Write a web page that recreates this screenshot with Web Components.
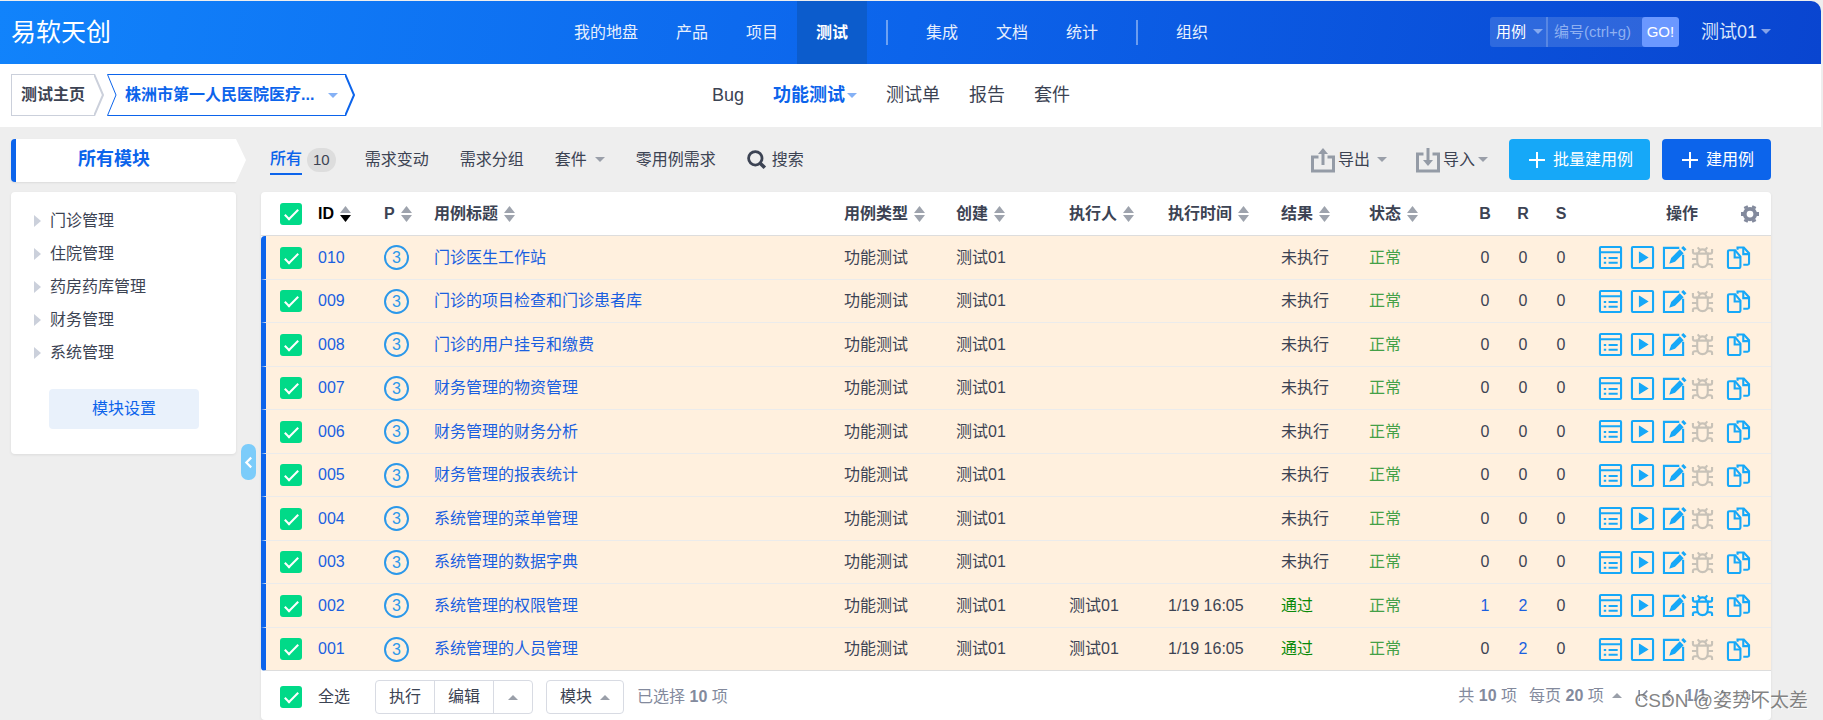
<!DOCTYPE html>
<html lang="zh-CN">
<head>
<meta charset="utf-8">
<title>功能测试</title>
<style>
  body {
    margin: 0;
    min-height: 100vh;
    box-sizing: border-box;
    padding: 1px 2px 0 0;
    position: relative;
    overflow: hidden;
    background: #eee;
    color: #3c4353;
    font: 16px/20px "Liberation Sans", "Noto Sans CJK SC", sans-serif;
  }
  .content {
    display: grid;
    grid-template-columns: 225px 25px minmax(0, 1fr);
    padding: 12px 50px 0 11px;
  }
  .watermark {
    position: absolute;
    right: 15px;
    bottom: 5px;
    font-size: 19px;
    line-height: 28px;
    color: rgba(110, 110, 110, 0.85);
    text-shadow: 1px 1px 0 rgba(255, 255, 255, 0.8);
  }
</style>
</head>
<body>
  <top-bar></top-bar>
  <sub-bar></sub-bar>
  <main class="content">
    <module-tree></module-tree>
    <side-toggle></side-toggle>
    <div>
      <filter-bar></filter-bar>
      <case-panel></case-panel>
    </div>
  </main>
  <div class="watermark">CSDN @姿势不太差</div>

<script>
const ICONS = {
  list: `<rect x="1" y="1" width="22" height="22" rx="1"/><path d="M1 6.500h22M10 12.500h9.500M10 17.500h9.500M5 12.500h2.500M5 17.500h2.500"/>`,
  play: `<rect x="1" y="1" width="22" height="22" rx="1"/><path d="M9 7l8 5-8 5z" fill="currentColor" stroke-width="1.5"/>`,
  edit: `<path d="M17 2H1v21h20V9"/><path d="M6.500 18.500l2-6L17.500 3.500l4 4-9 9z" fill="currentColor" stroke="none"/><path d="M19 2.200l2.200-2.200 3.300 3.300-2.200 2.200z" fill="currentColor" stroke="none"/>`,
  bug: `<path d="M6.500 8h11v8c0 4-2.500 6-5.500 6s-5.500-2-5.500-6z"/><path d="M8 8c0-3 1.500-4.500 4-4.500S16 5 16 8M1 13.500h5.500M17.500 13.500H23M2 3v3q0 2 2 2h3M22 3v3q0 2-2 2h-3M2 23v-2q0-2 2-2h3M22 23v-2q0-2-2-2h-3M7 1.500l2.500 3M17 1.500l-2.500 3"/>`,
  copy: `<path d="M1 6V21a2 2 0 0 0 2 2h9a2 2 0 0 0 2-2V11L8.500 4.500H2.500A1.500 1.500 0 0 0 1 6z"/><path d="M8 5v7h6"/><path d="M11 4V1.500h6.500L23 7.500V18a1.500 1.500 0 0 1-1.500 1.500H17"/><path d="M17 2v6.500h5"/>`,
  export: `<path d="M7.500 9H1.500V23h21V9h-6M12 17V3"/><path d="M7 6l5-6 5 6z" fill="currentColor" stroke="none"/>`,
  import: `<path d="M7.500 6H1.500V23h21V6h-6M12 0v13"/><path d="M7 12l5 6 5-6z" fill="currentColor" stroke="none"/>`,
  search: `<circle cx="10.500" cy="10.500" r="8.500" stroke-width="3.500"/><path d="M16 16l6.500 6.500" stroke-width="4.500"/>`,
  plus: `<path d="M12 0v24M0 12h24" stroke-width="3"/>`,
  gear: `<circle cx="12" cy="12" r="7" stroke-width="5"/><path d="M7.500 4.500l-1.500-3M16.500 4.500l1.500-3M7.500 19.500l-1.500 3M16.500 19.500l1.500 3M4 12H0M20 12h4" stroke-width="5.500"/>`,
  first: `<path d="M4 2v20M19 3l-9 9 9 9" stroke-width="3"/>`,
  prev: `<path d="M17 3l-9 9 9 9" stroke-width="4"/>`,
  next: `<path d="M7 3l9 9-9 9" stroke-width="4"/>`,
  last: `<path d="M20 2v20M5 3l9 9-9 9" stroke-width="3"/>`
};

// styles every component starts from
const BASE = `
  :host, * { box-sizing: border-box; }
  a { color: inherit; text-decoration: none; }
  button, select, input { font: inherit; color: inherit; border: 0; background: none; padding: 0; margin: 0; }
  input[type=checkbox] {
    appearance: none; display: block; width: 22px; height: 22px;
    background: #00da88; border-radius: 3px;
  }
  input[type=checkbox]::after {
    content: ""; display: block; box-sizing: border-box; width: 7px; height: 14px; margin: 3px 0 0 8px;
    border: solid #fff; border-width: 0 2px 2px 0; transform: rotate(45deg);
  }
`;

class BaseElement extends HTMLElement {
  constructor() {
    super();
    this.attachShadow({ mode: "open" });
  }
  connectedCallback() {
    this.shadowRoot.innerHTML = `<style>${BASE}${this.styles()}</style>${this.render()}`;
  }
  styles() { return ""; }
  render() { return ""; }
}

class UiIcon extends BaseElement {
  styles() {
    return `
      :host { display: inline-block; width: 24px; height: 24px; flex: none; }
      svg { display: block; width: 100%; height: 100%; overflow: visible; stroke-width: var(--stroke, 2); }
    `;
  }
  render() {
    return `<svg viewBox="0 0 24 24" fill="none" stroke="currentColor" aria-hidden="true">${ICONS[this.getAttribute("name")]}</svg>`;
  }
}

class UiCaret extends BaseElement {
  styles() {
    return `
      :host {
        display: inline-block; flex: none; width: 0; height: 0; color: #9a9fa9;
        border: 5px solid transparent; border-top-color: currentColor; border-bottom: 0;
      }
      :host([up]) { border-top: 0; border-bottom: 5px solid currentColor; }
    `;
  }
}

class SortMark extends BaseElement {
  styles() {
    return `
      :host { display: inline-block; width: 11px; height: 16px; margin-left: 6px; vertical-align: -3px; }
      svg { display: block; fill: #9ea3ad; }
      :host([desc]) .down { fill: #000; }
    `;
  }
  render() {
    return `<svg width="11" height="16" viewBox="0 0 11 16"><path d="M5.500 0L11 7H0z"/><path class="down" d="M5.500 16L11 9H0z"/></svg>`;
  }
}

class TopBar extends BaseElement {
  styles() {
    return `
      :host {
        display: grid; grid-template-columns: 1fr auto 1fr; height: 63px;
        padding: 0 50px 0 11px; border-radius: 0 10px 0 0; color: #fff;
        background: linear-gradient(100deg, #1183fb 0%, #0c64eb 50%, #0945d0 100%);
      }
      .logo { align-self: center; font-size: 25px; line-height: 32px; padding-bottom: 2px; }
      nav { display: flex; }
      nav a { padding: 22px 19px 21px; color: #e6effd; }
      nav a.active { background: #0c5ccc; font-weight: bold; color: #fff; }
      .bar { width: 2px; height: 25px; margin: 19px; background: rgba(255, 255, 255, .4); }
      .right { display: flex; align-items: center; justify-content: flex-end; gap: 22px; padding-bottom: 2px; }
      form {
        display: flex; align-items: center; height: 30px; border-radius: 3px;
        font-size: 15px; background: rgba(255, 255, 255, .15); overflow: hidden;
      }
      select { appearance: none; padding: 0 6px; width: 43px; }
      form ui-caret { color: #85a9f0; margin-right: 3px; }
      input { width: 96px; height: 30px; padding: 0 6px; border-left: 2px solid rgba(255, 255, 255, .2); }
      input::placeholder { color: #8fb0f1; opacity: 1; }
      form button { width: 37px; height: 30px; background: #6b98ff; border-radius: 3px; }
      .user { display: flex; align-items: center; gap: 4px; font-size: 18px; color: #dbe6fb; }
      .user ui-caret { color: #85a3e8; }
    `;
  }
  render() {
    return `
      <div class="logo">易软天创</div>
      <nav>
        <a href="#">我的地盘</a><a href="#">产品</a><a href="#">项目</a><a href="#" class="active">测试</a>
        <span class="bar"></span>
        <a href="#">集成</a><a href="#">文档</a><a href="#">统计</a>
        <span class="bar"></span>
        <a href="#">组织</a>
      </nav>
      <div class="right">
        <form>
          <select aria-label="对象类型"><option>用例</option></select>
          <ui-caret></ui-caret>
          <input type="text" placeholder="编号(ctrl+g)" aria-label="编号">
          <button type="button">GO!</button>
        </form>
        <button class="user">测试01<ui-caret></ui-caret></button>
      </div>
    `;
  }
}

class SubBar extends BaseElement {
  styles() {
    return `
      :host {
        display: grid; grid-template-columns: 1fr auto 1fr; align-items: center;
        height: 63px; padding: 0 50px 1px 11px; background: #fff;
      }
      .crumbs { display: flex; gap: 3px; }
      .crumb { display: flex; height: 42px; color: #cbd0db; }
      .crumb svg { display: block; fill: none; stroke: currentColor; stroke-width: 1; }
      .crumb span {
        display: flex; align-items: center; gap: 8px; white-space: nowrap;
        border: 1px solid currentColor; border-width: 1px 0; padding: 0 10px;
      }
      .home span { border-left-width: 1px; padding: 0 9px; }
      .home b { color: #3c4353; }
      .current { color: #0c64eb; }
      .current span { gap: 14px; padding: 0 7px 0 8px; }
      .current ui-caret { color: #85b1f5; }
      nav { display: flex; gap: 29px; font-size: 18px; }
      nav a { display: flex; align-items: center; gap: 2px; }
      nav .active { font-weight: bold; color: #0c64eb; }
      nav ui-caret { color: #85b1f5; }
    `;
  }
  render() {
    return `
      <div class="crumbs">
        <a href="#" class="crumb home"><span><b>测试主页</b></span>
          <svg width="10" height="42"><path d="M0 0L9 21L0 42" stroke-width="2"/></svg></a>
        <a href="#" class="crumb current">
          <svg width="10" height="42"><path d="M10 .5H.5L9 21L.5 41.500H10"/></svg>
          <span><b>株洲市第一人民医院医疗...</b><ui-caret></ui-caret></span>
          <svg width="10" height="42"><path d="M0 0L9 21L0 42" stroke-width="2"/></svg></a>
      </div>
      <nav>
        <a href="#">Bug</a>
        <a href="#" class="active">功能测试<ui-caret></ui-caret></a>
        <a href="#">测试单</a>
        <a href="#">报告</a>
        <a href="#">套件</a>
      </nav>
    `;
  }
}

class ModuleTree extends BaseElement {
  styles() {
    return `
      :host { display: block; }
      .head { display: flex; margin-right: -10px; height: 43px; margin-bottom: 10px; }
      .head h2 {
        margin: 0; flex: 1; font-size: 18px; line-height: 40px; text-align: center; color: #0c64eb;
        padding-right: 24px; background: #fff; border-left: 5px solid #0c64eb; border-radius: 4px 0 0 4px;
        box-shadow: 0 1px 2px rgba(0, 0, 0, .08);
      }
      .head svg { display: block; fill: #fff; }
      .panel {
        background: #fff; border-radius: 4px; height: 262px; padding: 12px 0 25px 23px;
        box-shadow: 0 1px 3px rgba(0, 0, 0, .08);
      }
      ul { list-style: none; margin: 0; padding: 0; }
      li { display: flex; align-items: center; gap: 9px; height: 33px; }
      li::before {
        content: ""; border: 6px solid transparent;
        border-left: 7px solid #cbd0db; border-right: 0;
      }
      button {
        width: 150px; height: 40px; margin: 20px 15px 0; border-radius: 4px;
        background: #e9f1fb; color: #0c64eb;
      }
    `;
  }
  render() {
    const items = ["门诊管理", "住院管理", "药房药库管理", "财务管理", "系统管理"];
    return `
      <div class="head"><h2>所有模块</h2><svg width="10" height="43"><path d="M0 0L10 21L0 43z"/></svg></div>
      <div class="panel">
        <ul>${items.map(t => `<li><a href="#">${t}</a></li>`).join("")}</ul>
        <button>模块设置</button>
      </div>
    `;
  }
}

class SideToggle extends BaseElement {
  styles() {
    return `
      :host { display: block; padding: 305px 5px 0; }
      button {
        display: flex; align-items: center; justify-content: center;
        width: 15px; height: 36px; border-radius: 7px; background: #7cccfa; color: #fff;
      }
      ui-icon { width: 13px; height: 13px; }
    `;
  }
  render() {
    return `<button aria-label="收起"><ui-icon name="prev"></ui-icon></button>`;
  }
}

class FilterBar extends BaseElement {
  styles() {
    return `
      :host { display: flex; justify-content: space-between; align-items: center; height: 41px; margin-bottom: 12px; }
      .tabs { display: flex; align-items: center; gap: 31px; padding-left: 9px; }
      .tabs a, button { display: flex; align-items: center; }
      .all { gap: 5px; margin-right: -2px; }
      .all b { font-weight: 500; color: #0c64eb; border-bottom: 2px solid #0c64eb; padding: 5px 0 4px; }
      .all i { font-style: normal; background: #ddd; border-radius: 12px; padding: 2px 6px; font-size: 15px; }
      .suite { gap: 8px; }
      .search { gap: 6px; }
      .search ui-icon { width: 19px; height: 19px; }
      .tools { display: flex; align-items: center; }
      .tools ui-icon { color: #949ba6; margin-right: 3px; --stroke: 3; }
      .tools ui-caret { margin-left: 7px; }
      .tools button { margin-right: 29px; }
      .tools .in { margin-right: 21px; }
      .in ui-caret { margin-left: 3px; }
      .tools .primary {
        height: 41px; padding: 0 17px 0 20px; margin: 0 0 0 12px;
        color: #fff; background: #0c64eb; border-radius: 4px;
      }
      .tools .batch { background: #16a8f8; margin: 0; }
      .primary ui-icon { width: 16px; height: 16px; margin-right: 8px; color: #fff; }
    `;
  }
  render() {
    return `
      <div class="tabs">
        <a href="#" class="all"><b>所有</b><i>10</i></a>
        <a href="#">需求变动</a>
        <a href="#">需求分组</a>
        <button class="suite">套件<ui-caret></ui-caret></button>
        <a href="#">零用例需求</a>
        <a href="#" class="search"><ui-icon name="search"></ui-icon>搜索</a>
      </div>
      <div class="tools">
        <button><ui-icon name="export"></ui-icon>导出<ui-caret></ui-caret></button>
        <button class="in"><ui-icon name="import"></ui-icon>导入<ui-caret></ui-caret></button>
        <button class="primary batch"><ui-icon name="plus"></ui-icon>批量建用例</button>
        <button class="primary"><ui-icon name="plus"></ui-icon>建用例</button>
      </div>
    `;
  }
}

const CASES = [
  { id: "010", title: "门诊医生工作站" },
  { id: "009", title: "门诊的项目检查和门诊患者库" },
  { id: "008", title: "门诊的用户挂号和缴费" },
  { id: "007", title: "财务管理的物资管理" },
  { id: "006", title: "财务管理的财务分析" },
  { id: "005", title: "财务管理的报表统计" },
  { id: "004", title: "系统管理的菜单管理" },
  { id: "003", title: "系统管理的数据字典" },
  { id: "002", title: "系统管理的权限管理", runner: "测试01", time: "1/19 16:05", b: 1, r: 2 },
  { id: "001", title: "系统管理的人员管理", runner: "测试01", time: "1/19 16:05", b: 0, r: 2 }
];

class CaseTable extends BaseElement {
  styles() {
    return `
      :host { display: block; }
      table { width: 100%; table-layout: fixed; border-collapse: separate; border-spacing: 0; }
      th, td { padding: 0; text-align: left; white-space: nowrap; }
      th { height: 44px; border-bottom: 1px solid #ddd; }
      td { height: 43px; border-bottom: 1px solid #ebebeb; background: #fff0de; }
      tr:nth-child(odd) td { height: 44px; }
      tr:last-child td { border-bottom-color: #ddd; }
      th:first-child { padding-left: 19px; }
      td:first-child { padding-left: 14px; border-left: 5px solid #0c64eb; }
      tr:first-child td:first-child { border-top-left-radius: 4px; }
      tr:last-child td:first-child { border-bottom-left-radius: 4px; }
      .sorted { color: #000; }
      .num { text-align: center; }
      td a { color: #1a5fe0; }
      .pri {
        display: block; width: 25px; height: 25px; border: 2px solid #2b98ea; border-radius: 50%;
        color: #2b98ea; line-height: 21px; text-align: center;
      }
      .pass { color: #0a8a0a; }
      .normal { color: #43a047; }
      .ops { padding-left: 19px; --stroke: 2.2; }
      .ops div, .last div { display: flex; align-items: center; color: #16a8f8; }
      .ops button { display: block; }
      .ops ui-icon { display: block; width: 23px; height: 23px; }
      .ops .play, .ops .edit { margin-left: 9px; }
      .ops .bug { margin-left: 5px; }
      .ops .bug:disabled { color: #c8c2b8; }
      .ops .copy { margin-left: 13px; }
      .last div { color: #838a9d; padding: 0 12px 0 86px; justify-content: space-between; }
      .last span { color: #3c4353; }
      .last ui-icon { display: block; width: 18px; height: 18px; }
    `;
  }
  row(c) {
    const count = n => n ? `<a href="#">${n}</a>` : "0";
    return `<tr>
      <td><input type="checkbox" checked aria-label="${c.id}"></td>
      <td><a href="#">${c.id}</a></td>
      <td><span class="pri">3</span></td>
      <td><a href="#">${c.title}</a></td>
      <td>功能测试</td>
      <td>测试01</td>
      <td>${c.runner || ""}</td>
      <td>${c.time || ""}</td>
      <td${c.time ? ` class="pass">通过` : ">未执行"}</td>
      <td class="normal">正常</td>
      <td class="num">${count(c.b)}</td>
      <td class="num">${count(c.r)}</td>
      <td class="num">0</td>
      <td class="ops"><div>
        <button aria-label="结果"><ui-icon name="list"></ui-icon></button>
        <button class="play" aria-label="执行"><ui-icon name="play"></ui-icon></button>
        <button class="edit" aria-label="编辑"><ui-icon name="edit"></ui-icon></button>
        <button class="bug" aria-label="转Bug" ${c.b ? "" : "disabled"}><ui-icon name="bug"></ui-icon></button>
        <button class="copy" aria-label="复制"><ui-icon name="copy"></ui-icon></button>
      </div></td>
    </tr>`;
  }
  render() {
    const cols = [57, 66, 50, 0, 112, 113, 99, 113, 88, 97, 38, 38, 38, 191];
    const heads = ["用例标题", "用例类型", "创建", "执行人", "执行时间", "结果", "状态"];
    return `
      <table>
        <colgroup>${cols.map(w => w ? `<col style="width:${w}px">` : "<col>").join("")}</colgroup>
        <thead><tr>
          <th><input type="checkbox" checked aria-label="全选"></th>
          <th class="sorted">ID<sort-mark desc></sort-mark></th>
          <th>P<sort-mark></sort-mark></th>
          ${heads.map(h => `<th>${h}<sort-mark></sort-mark></th>`).join("")}
          <th class="num">B</th><th class="num">R</th><th class="num">S</th>
          <th class="last"><div><span>操作</span><button aria-label="设置"><ui-icon name="gear"></ui-icon></button></div></th>
        </tr></thead>
        <tbody>${CASES.map(c => this.row(c)).join("")}</tbody>
      </table>
    `;
  }
}

class TableFooter extends BaseElement {
  styles() {
    return `
      :host { display: flex; align-items: center; justify-content: space-between; height: 49px; padding: 3px 16px 0 19px; }
      .left, .pager, label, .group, button { display: flex; align-items: center; }
      label { gap: 16px; margin-right: 25px; }
      .group { height: 34px; border: 1px solid #d8dbe3; border-radius: 4px; margin-right: 13px; }
      .group button { height: 32px; padding: 0 13px; gap: 8px; }
      .group button + button { border-left: 1px solid #d8dbe3; }
      .group .more { min-width: 39px; justify-content: center; }
      .info, .pager { color: #838a9d; }
      .pager { gap: 12px; padding-bottom: 3px; }
      .pager button { gap: 8px; }
      .pages { display: flex; align-items: center; gap: 11px; margin-left: 3px; }
      .pages ui-icon { width: 13px; height: 13px; }
    `;
  }
  render() {
    return `
      <div class="left">
        <label><input type="checkbox" checked>全选</label>
        <div class="group">
          <button>执行</button><button>编辑</button><button class="more" aria-label="更多"><ui-caret up></ui-caret></button>
        </div>
        <div class="group"><button>模块<ui-caret up></ui-caret></button></div>
        <span class="info">已选择 <b>10</b> 项</span>
      </div>
      <div class="pager">
        <span>共 <b>10</b> 项</span>
        <button><span>每页 <b>20</b> 项</span><ui-caret up></ui-caret></button>
        <div class="pages">
          <button aria-label="首页"><ui-icon name="first"></ui-icon></button>
          <button aria-label="上一页"><ui-icon name="prev"></ui-icon></button>
          <b>1/1</b>
          <button aria-label="下一页"><ui-icon name="next"></ui-icon></button>
          <button aria-label="末页"><ui-icon name="last"></ui-icon></button>
        </div>
      </div>
    `;
  }
}

class CasePanel extends BaseElement {
  styles() {
    return `:host { display: block; background: #fff; border-radius: 4px; box-shadow: 0 1px 3px rgba(0, 0, 0, .08); }`;
  }
  render() {
    return `<case-table></case-table><table-footer></table-footer>`;
  }
}

customElements.define("ui-icon", UiIcon);
customElements.define("ui-caret", UiCaret);
customElements.define("sort-mark", SortMark);
customElements.define("top-bar", TopBar);
customElements.define("sub-bar", SubBar);
customElements.define("module-tree", ModuleTree);
customElements.define("side-toggle", SideToggle);
customElements.define("filter-bar", FilterBar);
customElements.define("case-table", CaseTable);
customElements.define("table-footer", TableFooter);
customElements.define("case-panel", CasePanel);
</script>
</body>
</html>
